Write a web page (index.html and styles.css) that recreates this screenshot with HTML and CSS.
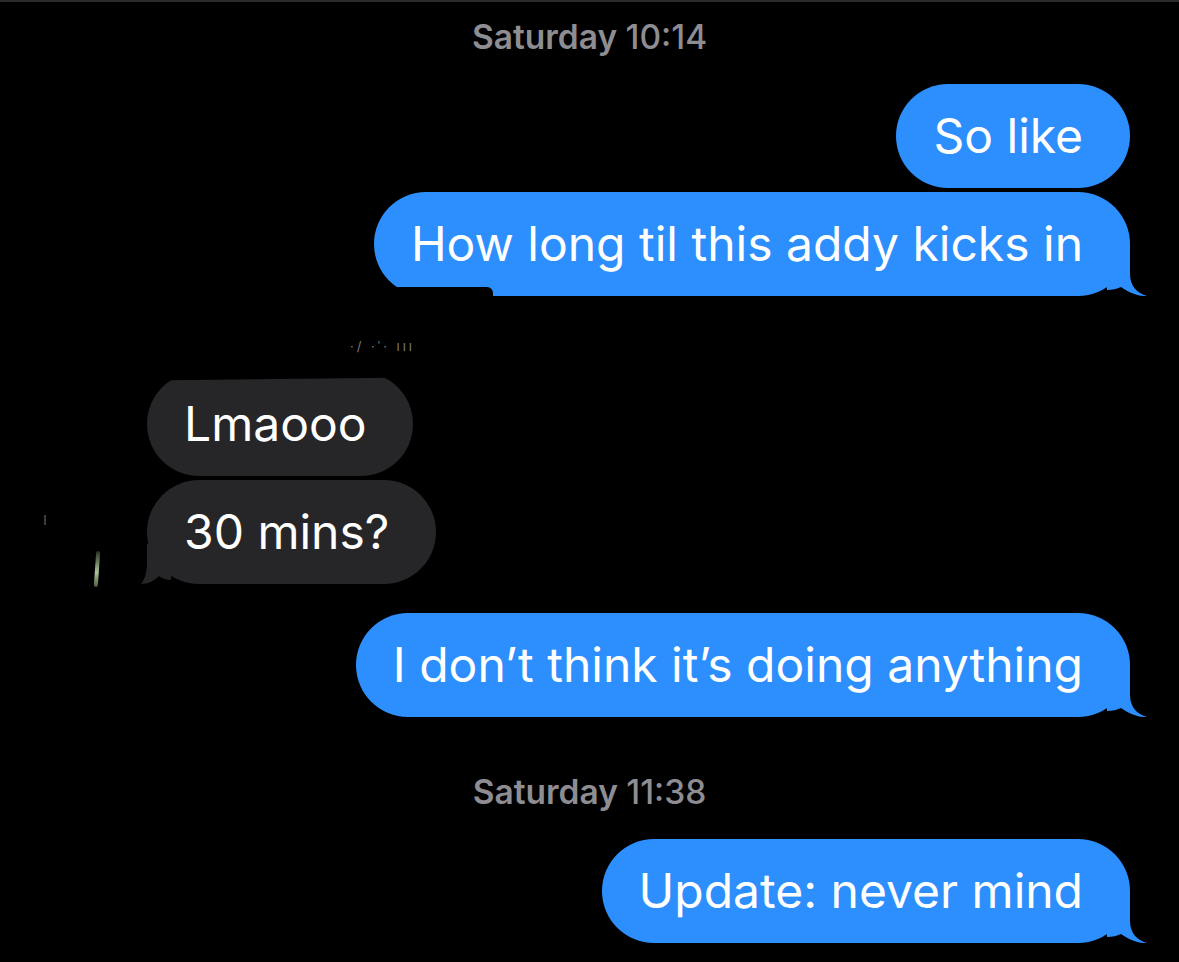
FILE: index.html
```html
<!DOCTYPE html>
<html>

<head>
  <meta charset="utf-8" />
  <title>Messages</title>
  <link rel="stylesheet" href="styles.css">
</head>

<body>
  <div class="thread">
    <div class="stamp">Saturday <span class="time">10:14</span></div>

    <div class="bubble sent first">So like</div>
    <div class="bubble sent">
      How long til this addy kicks in
      <span class="blot blot-sent"></span>
      <svg class="tail tail-sent" viewBox="0 0 40 52" width="40" height="52"><path d="M0 0H23V30C23 42 30 49 40 52C32 52.5 22 49 14 43C10 45 5 46 0 46Z" /></svg>
    </div>

    <div class="sender">·/ ·ˈ· ııı</div>
    <div class="bubble recv">
      Lmaooo
      <span class="blot blot-top"></span>
    </div>
    <div class="bubble recv last">
      30 mins?
      <svg class="tail tail-recv" viewBox="0 0 30 40" width="30" height="40"><path d="M30 0H6V18C6 28 4 35 0 40C7 40 13 37 18 32C22 35 26 36 30 36Z" /></svg>
      <span class="avatar-bit"></span>
      <span class="avatar-speck"></span>
    </div>

    <div class="bubble sent gap">
      I don’t think it’s doing anything
      <svg class="tail tail-sent" viewBox="0 0 40 52" width="40" height="52"><path d="M0 0H23V30C23 42 30 49 40 52C32 52.5 22 49 14 43C10 45 5 46 0 46Z" /></svg>
    </div>

    <div class="stamp stamp-2">Saturday <span class="time">11:38</span></div>

    <div class="bubble sent first">
      Update: never mind
      <svg class="tail tail-sent" viewBox="0 0 40 52" width="40" height="52"><path d="M0 0H23V30C23 42 30 49 40 52C32 52.5 22 49 14 43C10 45 5 46 0 46Z" /></svg>
    </div>
  </div>
</body>

</html>
```

FILE: styles.css
```css
html,
body {
  margin: 0;
  background: #000;
}

body {
  border-top: 2px solid #2a2a2c;
  font-family: Inter, "Noto Sans", sans-serif;
  -webkit-font-smoothing: antialiased;
}

.thread {
  display: flex;
  flex-direction: column;
  padding-top: 15px;
}

.stamp {
  align-self: center;
  height: 40px;
  line-height: 40px;
  font-size: 33.5px;
  font-weight: 600;
  color: #8d8d92;
}

.stamp .time {
  font-weight: 500;
}

.stamp-2 {
  margin-top: 55px;
}

.bubble {
  position: relative;
  padding: 21px 47px 21px 37px;
  line-height: 62px;
  font-size: 48px;
  color: #fff;
  border-radius: 52px;
  white-space: nowrap;
}

.sent {
  align-self: flex-end;
  margin-right: 49px;
  margin-top: 4px;
  background: #2d8ffd;
}

.sent.first {
  margin-top: 27px;
}

.sent.gap {
  margin-top: 29px;
}

.recv {
  align-self: flex-start;
  margin-left: 147px;
  margin-top: 4px;
  background: #262628;
}

.tail {
  position: absolute;
  bottom: 0;
  display: block;
}

.tail-sent {
  right: -17px;
  fill: #2d8ffd;
}

.tail-recv {
  left: -6px;
  fill: #262628;
}

/* redaction scribbles */
.blot {
  position: absolute;
  background: #000;
}

.blot-sent {
  left: 22px;
  bottom: -2px;
  width: 97px;
  height: 11px;
  border-radius: 2px 6px 0 0;
}

.blot-top {
  left: 0;
  top: -2px;
  width: 100%;
  height: 9px;
  transform: rotate(-0.6deg);
}

.sender {
  align-self: flex-start;
  margin: 40px 0 12px 350px;
  height: 20px;
  line-height: 20px;
  font-size: 13px;
  letter-spacing: 3px;
  color: #7a7a7e;
}

.avatar-bit {
  position: absolute;
  left: -52px;
  bottom: -3px;
  width: 4px;
  height: 36px;
  border-radius: 2px;
  background: linear-gradient(#27321f, #a9c49a 60%, #4b5a3c);
  transform: rotate(4deg);
}

.avatar-speck {
  position: absolute;
  left: -103px;
  top: 35px;
  width: 2px;
  height: 10px;
  background: #3a3d38;
}
```
